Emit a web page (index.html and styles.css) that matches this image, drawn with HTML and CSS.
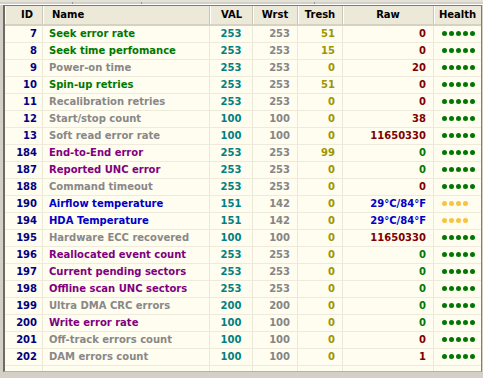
FILE: index.html
```
<!DOCTYPE html>
<html>
<head>
<meta charset="utf-8">
<link rel="stylesheet" href="styles.css">
</head>
<body>
<div class="tabs"><span class="tab t1"></span><span class="tab t2"></span><span class="tab t3"></span></div>
<div class="list">
  <div class="row head">
    <div class="c id">ID</div><div class="c name">Name</div><div class="c val">VAL</div><div class="c wrst">Wrst</div><div class="c tr">Tresh</div><div class="c raw">Raw</div><div class="c hl">Health</div>
  </div>
  <div class="row"><div class="c id">7</div><div class="c name g">Seek error rate</div><div class="c val">253</div><div class="c wrst">253</div><div class="c tr">51</div><div class="c raw r">0</div><div class="c hl"><span class="dots"><i></i><i></i><i></i><i></i><i></i></span></div></div>
  <div class="row"><div class="c id">8</div><div class="c name g">Seek time perfomance</div><div class="c val">253</div><div class="c wrst">253</div><div class="c tr">15</div><div class="c raw r">0</div><div class="c hl"><span class="dots"><i></i><i></i><i></i><i></i><i></i></span></div></div>
  <div class="row"><div class="c id">9</div><div class="c name s">Power-on time</div><div class="c val">253</div><div class="c wrst">253</div><div class="c tr">0</div><div class="c raw r">20</div><div class="c hl"><span class="dots"><i></i><i></i><i></i><i></i><i></i></span></div></div>
  <div class="row"><div class="c id">10</div><div class="c name g">Spin-up retries</div><div class="c val">253</div><div class="c wrst">253</div><div class="c tr">51</div><div class="c raw r">0</div><div class="c hl"><span class="dots"><i></i><i></i><i></i><i></i><i></i></span></div></div>
  <div class="row"><div class="c id">11</div><div class="c name s">Recalibration retries</div><div class="c val">253</div><div class="c wrst">253</div><div class="c tr">0</div><div class="c raw r">0</div><div class="c hl"><span class="dots"><i></i><i></i><i></i><i></i><i></i></span></div></div>
  <div class="row"><div class="c id">12</div><div class="c name s">Start/stop count</div><div class="c val">100</div><div class="c wrst">100</div><div class="c tr">0</div><div class="c raw r">38</div><div class="c hl"><span class="dots"><i></i><i></i><i></i><i></i><i></i></span></div></div>
  <div class="row"><div class="c id">13</div><div class="c name s">Soft read error rate</div><div class="c val">100</div><div class="c wrst">100</div><div class="c tr">0</div><div class="c raw r">11650330</div><div class="c hl"><span class="dots"><i></i><i></i><i></i><i></i><i></i></span></div></div>
  <div class="row"><div class="c id">184</div><div class="c name p">End-to-End error</div><div class="c val">253</div><div class="c wrst">253</div><div class="c tr">99</div><div class="c raw g">0</div><div class="c hl"><span class="dots"><i></i><i></i><i></i><i></i><i></i></span></div></div>
  <div class="row"><div class="c id">187</div><div class="c name p">Reported UNC error</div><div class="c val">253</div><div class="c wrst">253</div><div class="c tr">0</div><div class="c raw g">0</div><div class="c hl"><span class="dots"><i></i><i></i><i></i><i></i><i></i></span></div></div>
  <div class="row"><div class="c id">188</div><div class="c name s">Command timeout</div><div class="c val">253</div><div class="c wrst">253</div><div class="c tr">0</div><div class="c raw r">0</div><div class="c hl"><span class="dots"><i></i><i></i><i></i><i></i><i></i></span></div></div>
  <div class="row"><div class="c id">190</div><div class="c name b">Airflow temperature</div><div class="c val">151</div><div class="c wrst">142</div><div class="c tr">0</div><div class="c raw b">29°C/84°F</div><div class="c hl"><span class="dots y"><i></i><i></i><i></i><i></i></span></div></div>
  <div class="row"><div class="c id">194</div><div class="c name b">HDA Temperature</div><div class="c val">151</div><div class="c wrst">142</div><div class="c tr">0</div><div class="c raw b">29°C/84°F</div><div class="c hl"><span class="dots y"><i></i><i></i><i></i><i></i></span></div></div>
  <div class="row"><div class="c id">195</div><div class="c name s">Hardware ECC recovered</div><div class="c val">100</div><div class="c wrst">100</div><div class="c tr">0</div><div class="c raw r">11650330</div><div class="c hl"><span class="dots"><i></i><i></i><i></i><i></i><i></i></span></div></div>
  <div class="row"><div class="c id">196</div><div class="c name p">Reallocated event count</div><div class="c val">253</div><div class="c wrst">253</div><div class="c tr">0</div><div class="c raw g">0</div><div class="c hl"><span class="dots"><i></i><i></i><i></i><i></i><i></i></span></div></div>
  <div class="row"><div class="c id">197</div><div class="c name p">Current pending sectors</div><div class="c val">253</div><div class="c wrst">253</div><div class="c tr">0</div><div class="c raw g">0</div><div class="c hl"><span class="dots"><i></i><i></i><i></i><i></i><i></i></span></div></div>
  <div class="row"><div class="c id">198</div><div class="c name p">Offline scan UNC sectors</div><div class="c val">253</div><div class="c wrst">253</div><div class="c tr">0</div><div class="c raw g">0</div><div class="c hl"><span class="dots"><i></i><i></i><i></i><i></i><i></i></span></div></div>
  <div class="row"><div class="c id">199</div><div class="c name s">Ultra DMA CRC errors</div><div class="c val">200</div><div class="c wrst">200</div><div class="c tr">0</div><div class="c raw g">0</div><div class="c hl"><span class="dots"><i></i><i></i><i></i><i></i><i></i></span></div></div>
  <div class="row"><div class="c id">200</div><div class="c name p">Write error rate</div><div class="c val">100</div><div class="c wrst">100</div><div class="c tr">0</div><div class="c raw g">0</div><div class="c hl"><span class="dots"><i></i><i></i><i></i><i></i><i></i></span></div></div>
  <div class="row"><div class="c id">201</div><div class="c name s">Off-track errors count</div><div class="c val">100</div><div class="c wrst">100</div><div class="c tr">0</div><div class="c raw r">0</div><div class="c hl"><span class="dots"><i></i><i></i><i></i><i></i><i></i></span></div></div>
  <div class="row"><div class="c id">202</div><div class="c name s">DAM errors count</div><div class="c val">100</div><div class="c wrst">100</div><div class="c tr">0</div><div class="c raw r">1</div><div class="c hl"><span class="dots"><i></i><i></i><i></i><i></i><i></i></span></div></div>
  <div class="row empty"><div class="c id"></div><div class="c name"></div><div class="c val"></div><div class="c wrst"></div><div class="c tr"></div><div class="c raw"></div><div class="c hl"></div></div>
</div>
</body>
</html>
```
FILE: styles.css
```
html, body {
  margin: 0;
  padding: 0;
}
body {
  width: 483px;
  height: 378px;
  overflow: hidden;
  background: #d4d0c8;
  font-family: "DejaVu Sans", Verdana, sans-serif;
  font-size: 10px;
  font-weight: bold;
}
.tabs {
  height: 5px;
  box-sizing: border-box;
  border-top: 2px solid #e4e1d6;
  border-bottom: 1px solid #ffffff;
  display: flex;
}
.tab {
  height: 2px;
  border-right: 1px solid #9a9890;
}
.t1 { width: 72px; }
.t2 { width: 68px; }
.t3 { width: 172px; }
.list {
  margin-left: 3px;
  width: 479px;
  height: 367px;
  box-sizing: border-box;
  border-top: 1px solid #7f7d74;
  border-left: 2px solid #6d6b62;
  border-right: 1px solid #7f7d74;
  border-bottom: 1px solid #b5b2a6;
  background: #fffcf0;
  overflow: hidden;
}
.row {
  display: grid;
  grid-template-columns: 38px 167px 43px 45px 45px 91px 1fr;
  height: 17px;
  line-height: 16px;
  box-sizing: border-box;
  border-bottom: 1px solid #efebdc;
}
.c {
  box-sizing: border-box;
  border-right: 1px solid #ece8d8;
  white-space: nowrap;
  overflow: hidden;
}
.hl { border-right: none; }

.id { text-align: right; padding-right: 5px; color: #000080; }
.name { padding-left: 6px; }
.val { text-align: center; color: #008080; }
.wrst { text-align: right; padding-right: 7px; color: #858585; }
.tr { text-align: right; padding-right: 7px; color: #9c9600; }
.raw { text-align: right; padding-right: 7px; }
.hl { padding-left: 8px; }

.row.head {
  height: 20px;
  line-height: 18px;
  background: #ece9d8;
  border-bottom: 2px solid #d6d2c2;
}
.row.head .c {
  color: #000000;
  text-align: center;
  padding-left: 0;
  padding-right: 0;
  border-right: 1px solid #c9c6b6;
  box-shadow: inset 1px 0 0 #ffffff;
}
.row.head .c.id { padding-left: 7px; }
.row.head .c.name { text-align: left; padding-left: 9px; }
.row.head .c.val { padding-left: 1px; }
.row.head .c.hl { border-right: none; }

.g { color: #007800; }
.s { color: #888888; }
.p { color: #800080; }
.b { color: #0000c8; }
.r { color: #800000; }

.dots {
  display: inline-flex;
  gap: 2px;
  vertical-align: middle;
  margin-top: -2px;
}
.dots i {
  display: block;
  width: 5px;
  height: 5px;
  border-radius: 50%;
  background: #007800;
}
.dots.y i { background: #f8c440; }
.empty { border-bottom: none; }
```
